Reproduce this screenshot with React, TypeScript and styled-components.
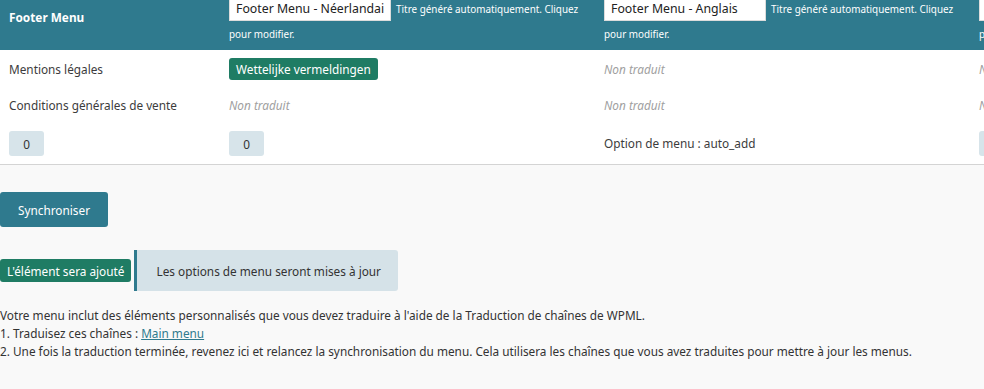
import React from "react";
import styled, { createGlobalStyle } from "styled-components";

const GlobalStyle = createGlobalStyle`
  body {
    margin: 0;
    background: #f9f9f9;
    font-family: "Noto Sans", "Open Sans", sans-serif;
    font-size: 11.8px;
    color: #3c3c3c;
  }
`;

const Page = styled.div`
  width: 984px;
  overflow: hidden;
`;

const Table = styled.table`
  width: 1360px;
  margin-top: -5px;
  border-collapse: collapse;
  table-layout: fixed;
  background: #fff;
  border-bottom: 1px solid #d4d4d4;
`;

const HeadRow = styled.tr`
  background: #2f7a8e;
  color: #fff;
`;

const MenuTitle = styled.th`
  text-align: left;
  vertical-align: top;
  padding: 13px 9px 0;
  font-size: 11.8px;
  font-weight: 700;
  line-height: 18px;
`;

const LangHead = styled.th`
  text-align: left;
  vertical-align: top;
  padding: 0 9px 4px;
  font-weight: 400;
  line-height: 24px;
`;

const TitleInput = styled.input`
  box-sizing: border-box;
  width: 162px;
  height: 26px;
  padding: 0 6px;
  border: 1px solid #dcdcdc;
  border-radius: 0;
  background: #fff;
  color: #222;
  font-family: "Noto Sans", "Open Sans", sans-serif;
  font-size: 12.3px;
  vertical-align: baseline;
  outline: none;
`;

const Hint = styled.span`
  font-size: 9.9px;
  margin-left: 2px;
`;

const Cell = styled.td`
  padding: 8px 9px;
  vertical-align: middle;
  line-height: 19px;
  white-space: nowrap;
`;

const Missing = styled.span`
  font-style: italic;
  color: #a0a0a0;
`;

const Badge = styled.span<{ $tall?: boolean }>`
  display: inline-flex;
  align-items: center;
  height: ${(p) => (p.$tall ? 23 : 22)}px;
  padding: 0 7px;
  border-radius: 3px;
  background: #1f7c64;
  color: #fff;
  font-size: 11.8px;
  white-space: nowrap;
`;

const CountButton = styled.button`
  width: 35px;
  height: 25px;
  border: 0;
  border-radius: 3px;
  background: #d7e4ea;
  color: #333;
  font-family: inherit;
  font-size: 11.8px;
  padding: 0;
`;

const SyncButton = styled.button`
  display: block;
  margin-top: 27px;
  width: 108px;
  height: 35px;
  border: 0;
  border-radius: 3px;
  background: #2f7a8e;
  color: #fff;
  font-family: inherit;
  font-size: 11.8px;
  padding: 0;
`;

const StatusRow = styled.div`
  display: flex;
  align-items: center;
  gap: 3px;
  margin-top: 23px;
`;

const Notice = styled.div`
  display: flex;
  align-items: center;
  height: 41px;
  padding: 0 17px 0 19px;
  border-left: 3px solid #2f7a8e;
  border-radius: 0 3px 3px 0;
  background: #d5e2e8;
  color: #333;
  white-space: nowrap;
`;

const Help = styled.div`
  margin-top: 15px;
  line-height: 18px;
  color: #333;
  white-space: nowrap;
`;

const Link = styled.a`
  color: #2f7a8e;
  text-decoration: underline;
`;

const languages = [
  { title: "Footer Menu - Néerlandais" },
  { title: "Footer Menu - Anglais" },
  { title: "Footer Menu - Allemand" },
];

const hint = "Titre généré automatiquement. Cliquez pour modifier.";

export default function App() {
  return (
    <Page>
      <GlobalStyle />
      <Table>
        <colgroup>
          <col style={{ width: 220 }} />
          <col style={{ width: 375 }} />
          <col style={{ width: 375 }} />
          <col style={{ width: 390 }} />
        </colgroup>
        <thead>
          <HeadRow>
            <MenuTitle>Footer Menu</MenuTitle>
            {languages.map((l) => (
              <LangHead key={l.title}>
                <TitleInput defaultValue={l.title} /> <Hint>{hint}</Hint>
              </LangHead>
            ))}
          </HeadRow>
        </thead>
        <tbody>
          <tr>
            <Cell>Mentions légales</Cell>
            <Cell>
              <Badge>Wettelijke vermeldingen</Badge>
            </Cell>
            <Cell>
              <Missing>Non traduit</Missing>
            </Cell>
            <Cell>
              <Missing>Non traduit</Missing>
            </Cell>
          </tr>
          <tr>
            <Cell>Conditions générales de vente</Cell>
            <Cell>
              <Missing>Non traduit</Missing>
            </Cell>
            <Cell>
              <Missing>Non traduit</Missing>
            </Cell>
            <Cell>
              <Missing>Non traduit</Missing>
            </Cell>
          </tr>
          <tr>
            <Cell>
              <CountButton>0</CountButton>
            </Cell>
            <Cell>
              <CountButton>0</CountButton>
            </Cell>
            <Cell>Option de menu : auto_add</Cell>
            <Cell>
              <CountButton>0</CountButton>
            </Cell>
          </tr>
        </tbody>
      </Table>

      <SyncButton>Synchroniser</SyncButton>

      <StatusRow>
        <Badge $tall>L'élément sera ajouté</Badge>
        <Notice>Les options de menu seront mises à jour</Notice>
      </StatusRow>

      <Help>
        Votre menu inclut des éléments personnalisés que vous devez traduire à l'aide de la Traduction de chaînes de WPML.
        <br />
        1. Traduisez ces chaînes : <Link href="#">Main menu</Link>
        <br />
        2. Une fois la traduction terminée, revenez ici et relancez la synchronisation du menu. Cela utilisera les chaînes que vous avez traduites pour mettre à jour les menus.
      </Help>
    </Page>
  );
}
